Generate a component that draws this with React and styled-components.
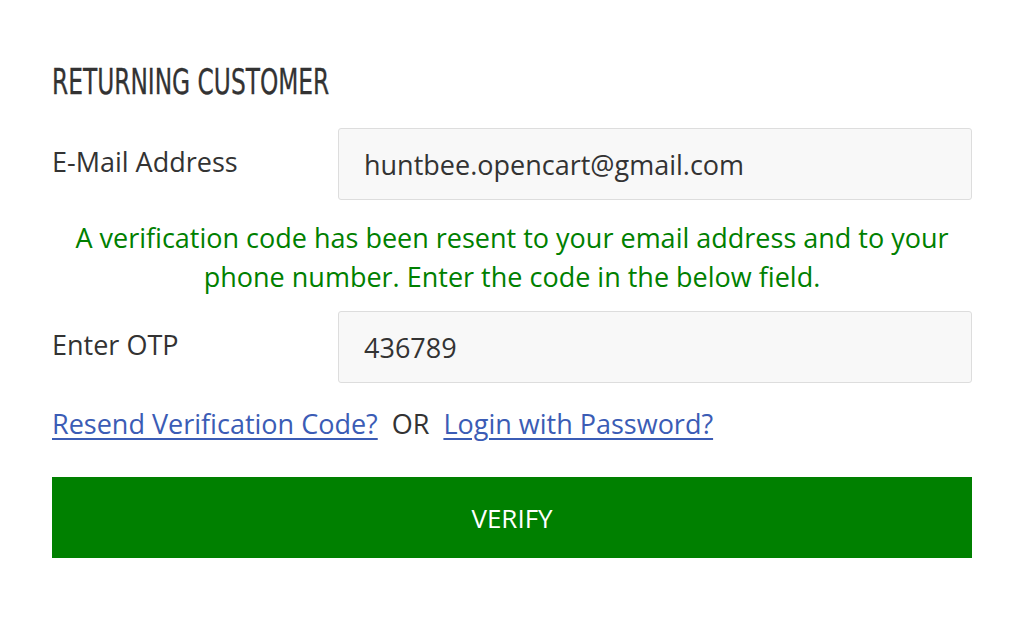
import React, { useState } from 'react'
import styled, { createGlobalStyle } from 'styled-components'

const GlobalStyle = createGlobalStyle`
  body {
    margin: 0;
    background: #fff;
    font-family: 'Open Sans', 'Noto Sans', sans-serif;
    color: #333;
  }
`

const Page = styled.div`
  width: 920px;
  padding: 56px 52px 0;
`

const Heading = styled.h2`
  margin: 0 0 22px;
  padding-top: 2px;
  font-family: 'Liberation Sans Narrow', 'DejaVu Sans Condensed', sans-serif;
  font-weight: 400;
  font-size: 35px;
  line-height: 48px;
  color: #333;
  -webkit-text-stroke: 0.3px #333;
  transform: scaleX(0.74);
  transform-origin: left center;
`

const FormRow = styled.div`
  display: grid;
  grid-template-columns: 286px 1fr;
  align-items: start;
`

const Label = styled.label`
  font-size: 27px;
  line-height: 40px;
  padding-top: 14px;
  color: #333;
`

const Input = styled.input`
  box-sizing: border-box;
  width: 100%;
  height: 72px;
  padding: 0 25px;
  font-family: inherit;
  font-size: 27px;
  color: #333;
  background: #f8f8f8;
  border: 1px solid #ddd;
  border-radius: 3px;
  outline: none;
`

const Notice = styled.p`
  margin: 18px 0 15px;
  font-size: 27px;
  line-height: 39px;
  text-align: center;
  color: #008000;
`

const Links = styled.div`
  display: flex;
  align-items: center;
  gap: 14px;
  margin: 21px 0 33px;
  font-size: 27px;
  line-height: 40px;
`

const Link = styled.a`
  color: #3b5cb5;
  text-decoration: underline;
  text-underline-offset: 4px;
  cursor: pointer;
`

const VerifyButton = styled.button`
  display: block;
  width: 100%;
  height: 81px;
  border: none;
  background: #008000;
  color: #fff;
  font-family: inherit;
  font-size: 26px;
  cursor: pointer;
`

const App = () => {
  const [email, setEmail] = useState('huntbee.opencart@gmail.com')
  const [otp, setOtp] = useState('436789')

  return (
    <>
      <GlobalStyle />
      <Page>
        <Heading>RETURNING CUSTOMER</Heading>
        <FormRow>
          <Label>E-Mail Address</Label>
          <Input value={email} onChange={(e) => setEmail(e.target.value)} />
        </FormRow>
        <Notice>
          A verification code has been resent to your email address and to your
          phone number. Enter the code in the below field.
        </Notice>
        <FormRow>
          <Label>Enter OTP</Label>
          <Input value={otp} onChange={(e) => setOtp(e.target.value)} />
        </FormRow>
        <Links>
          <Link>Resend Verification Code?</Link>
          <span>OR</span>
          <Link>Login with Password?</Link>
        </Links>
        <VerifyButton>VERIFY</VerifyButton>
      </Page>
    </>
  )
}

export default App
